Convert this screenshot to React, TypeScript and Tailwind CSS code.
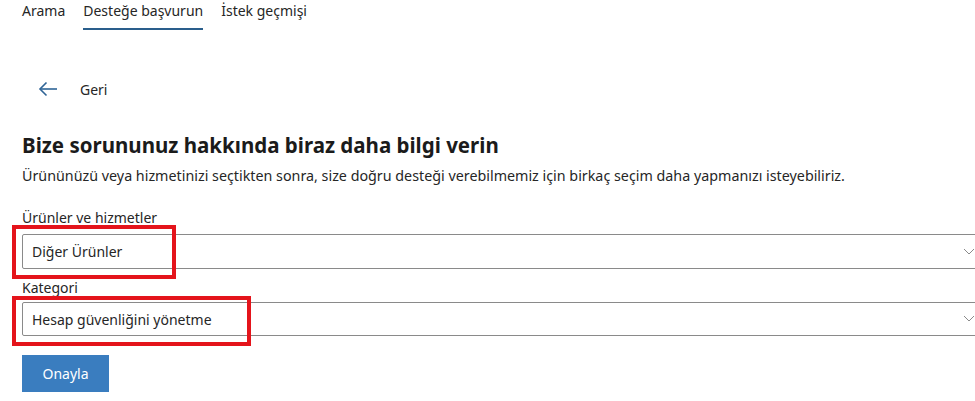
export default function App() {
    return (
        <div className="w-[975px] h-[401px] overflow-hidden bg-white text-[#262626] relative" style={{ fontFamily: '"Noto Sans", "Open Sans", sans-serif' }}>
            {/* sekmeler */}
            <div className="flex pl-[22px] gap-[18px] text-[14px] leading-[20px]">
                <a className="pt-[1px] pb-[9px]">Arama</a>
                <a className="pt-[1px] pb-[7px] border-b-2 border-[#2a5e8c]">Desteğe başvurun</a>
                <a className="pt-[1px] pb-[9px]">İstek geçmişi</a>
            </div>

            <div className="flex items-center pl-[38px] mt-[49px] h-[20px] text-[14px]">
                <svg width="20" height="16" viewBox="0 0 20 16" fill="none" stroke="#2f6496" strokeWidth="1.6">
                    <path d="M19 8H2" />
                    <path d="M8.5 1.5L2 8l6.5 6.5" />
                </svg>
                <span className="ml-[22px]">Geri</span>
            </div>

            <div className="pl-[22px]">
                <h1 className="mt-[32px] text-[20.5px] leading-[28px] font-bold text-[#1b1b1b]">Bize sorununuz hakkında biraz daha bilgi verin</h1>
                <p className="mt-[7px] text-[14.3px] leading-[20px]">Ürününüzü veya hizmetinizi seçtikten sonra, size doğru desteği verebilmemiz için birkaç seçim daha yapmanızı isteyebiliriz.</p>

                <label className="block mt-[22px] text-[14px] leading-[20px]">Ürünler ve hizmetler</label>
                <div className="mt-[6px] w-[963px] h-[35px] border border-[#8a8a8a] rounded-[2px] flex items-center justify-between px-[9px] text-[14px]">
                    <span>Diğer Ürünler</span>
                    <svg width="12" height="8" viewBox="0 0 12 8" fill="none" stroke="#8a8a8a" strokeWidth="1"><path d="M1 1l5 5 5-5" /></svg>
                </div>

                <label className="block mt-[9px] text-[14px] leading-[20px]">Kategori</label>
                <div className="mt-[4px] w-[963px] h-[34px] border border-[#8a8a8a] rounded-[2px] flex items-center justify-between px-[9px] text-[14px]">
                    <span>Hesap güvenliğini yönetme</span>
                    <svg width="12" height="8" viewBox="0 0 12 8" fill="none" stroke="#8a8a8a" strokeWidth="1"><path d="M1 1l5 5 5-5" /></svg>
                </div>

                <button className="mt-[19px] w-[87px] h-[37px] bg-[#3a7dbf] text-white text-[14px]">Onayla</button>
            </div>

            {/* kırmızı işaretler */}
            <div className="absolute left-[12px] top-[225px] w-[164px] h-[54px] border-4 border-[#e4141b]" />
            <div className="absolute left-[12px] top-[296px] w-[239px] h-[50px] border-4 border-[#e4141b]" />
        </div>
    );
}
